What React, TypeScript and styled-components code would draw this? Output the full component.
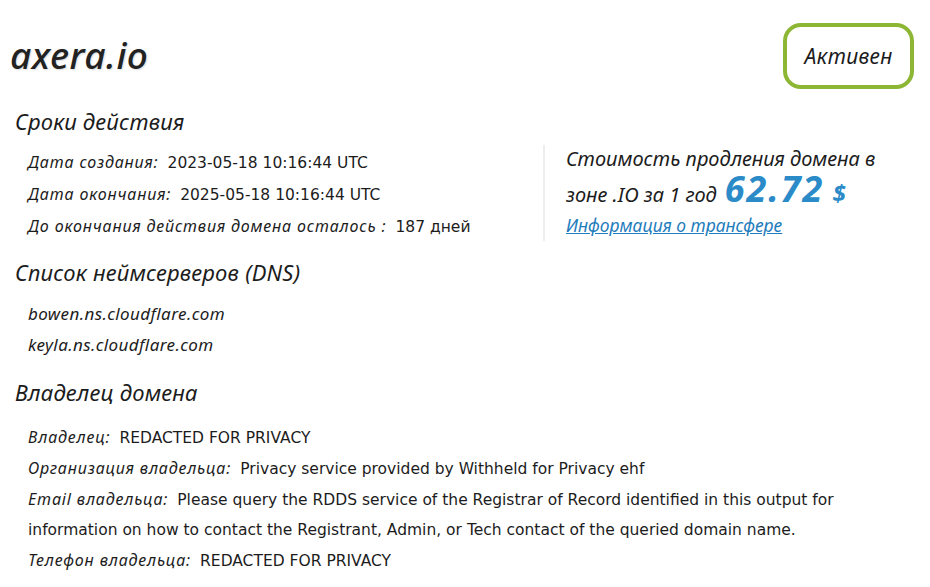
import React from "react";
import styled, { createGlobalStyle } from "styled-components";

const Global = createGlobalStyle`
  html, body { margin: 0; padding: 0; background: #fff; }
  body { font-family: "DejaVu Sans", sans-serif; color: #1c1c1c; }
`;

const Page = styled.div`
  width: 930px;
  height: 587px;
  box-sizing: border-box;
  padding: 23px 16px 0 10px;
  overflow: hidden;
`;

const Header = styled.div`
  display: flex;
  justify-content: space-between;
  align-items: flex-start;
`;

const Title = styled.h1`
  margin: 11px 0 0 0;
  font-family: "Noto Sans", sans-serif;
  font-style: italic;
  font-weight: 500;
  font-size: 37px;
  line-height: 42px;
  letter-spacing: 0.5px;
  color: #222;
  text-shadow: 1px 1px 2px rgba(0, 0, 0, 0.15);
`;

const Badge = styled.div`
  width: 131px;
  height: 66px;
  box-sizing: border-box;
  border: 4px solid #8cb634;
  border-radius: 18px;
  display: flex;
  align-items: center;
  justify-content: center;
  font-family: "Noto Sans", sans-serif;
  font-style: italic;
  font-size: 21px;
  letter-spacing: 0.3px;
  color: #1c1c1c;
`;

const SectionTitle = styled.h2<{ $top: number }>`
  margin: ${(p) => p.$top}px 0 0 5px;
  font-family: "Noto Sans", sans-serif;
  font-style: italic;
  font-weight: 400;
  font-size: 22px;
  line-height: 28px;
  letter-spacing: 0.2px;
  color: #1c1c1c;
`;

const TermsRow = styled.div`
  display: flex;
  align-items: flex-start;
  margin-top: 12px;
`;

const List = styled.div<{ $lh: number; $top: number }>`
  padding-left: 18px;
  margin-top: ${(p) => p.$top}px;
  line-height: ${(p) => p.$lh}px;
`;

const TermsList = styled(List)`
  width: 515px;
`;

const Row = styled.div`
  max-width: 860px;
`;

const Label = styled.span`
  font-family: "Noto Sans", sans-serif;
  font-style: italic;
  font-size: 16px;
  letter-spacing: 0.85px;
  margin-right: 9px;
`;

const Value = styled.span`
  font-family: "DejaVu Sans", sans-serif;
  font-size: 15.5px;
`;

const NsItem = styled.div`
  font-family: "Noto Sans", sans-serif;
  font-style: italic;
  font-size: 17px;
  letter-spacing: 0.4px;
`;

const PricePanel = styled.div`
  margin-top: -2px;
  border-left: 2px solid #eeeeee;
  padding: 0 0 4px 21px;
  width: 340px;
  font-family: "Noto Sans", sans-serif;
  font-style: italic;
  font-size: 20px;
  color: #1c1c1c;
`;

const PriceLine = styled.div`
  line-height: 28px;
`;

const PriceLine2 = styled.div`
  line-height: 31px;
  display: flex;
  align-items: baseline;
  gap: 8px;
`;

const Amount = styled.span`
  font-size: 36px;
  font-weight: 700;
  color: #2b8bc8;
  letter-spacing: 2px;
`;

const Currency = styled.span`
  font-size: 24px;
  font-weight: 700;
  color: #2b8bc8;
`;

const Link = styled.a`
  display: block;
  margin-top: 3px;
  font-size: 17.5px;
  color: #1f7dbd;
  text-decoration: underline;
  line-height: 24px;
`;

export default function App() {
  return (
    <>
      <Global />
      <Page>
        <Header>
          <Title>axera.io</Title>
          <Badge>Активен</Badge>
        </Header>
        <SectionTitle $top={18}>Сроки действия</SectionTitle>
        <TermsRow>
          <TermsList $lh={31} $top={0}>
            <Row>
              <Label>Дата создания:</Label>
              <Value>2023-05-18 10:16:44 UTC</Value>
            </Row>
            <Row>
              <Label>Дата окончания:</Label>
              <Value>2025-05-18 10:16:44 UTC</Value>
            </Row>
            <Row>
              <Label>До окончания действия домена осталось :</Label>
              <Value>187 дней</Value>
            </Row>
          </TermsList>
          <PricePanel>
            <PriceLine>Стоимость продления домена в</PriceLine>
            <PriceLine2>
              <span>зоне .IO за 1 год</span>
              <Amount>62.72</Amount>
              <Currency>$</Currency>
            </PriceLine2>
            <Link href="#">Информация о трансфере</Link>
          </PricePanel>
        </TermsRow>
        <SectionTitle $top={15}>Список неймсерверов (DNS)</SectionTitle>
        <List $lh={31} $top={12}>
          <NsItem>bowen.ns.cloudflare.com</NsItem>
          <NsItem>keyla.ns.cloudflare.com</NsItem>
        </List>
        <SectionTitle $top={18}>Владелец домена</SectionTitle>
        <List $lh={30} $top={16}>
          <Row>
            <Label>Владелец:</Label>
            <Value>REDACTED FOR PRIVACY</Value>
          </Row>
          <Row>
            <Label>Организация владельца:</Label>
            <Value>Privacy service provided by Withheld for Privacy ehf</Value>
          </Row>
          <Row>
            <Label>Email владельца:</Label>
            <Value>
              Please query the RDDS service of the Registrar of Record identified in this output for
              information on how to contact the Registrant, Admin, or Tech contact of the queried domain name.
            </Value>
          </Row>
          <Row>
            <Label>Телефон владельца:</Label>
            <Value>REDACTED FOR PRIVACY</Value>
          </Row>
        </List>
      </Page>
    </>
  );
}
